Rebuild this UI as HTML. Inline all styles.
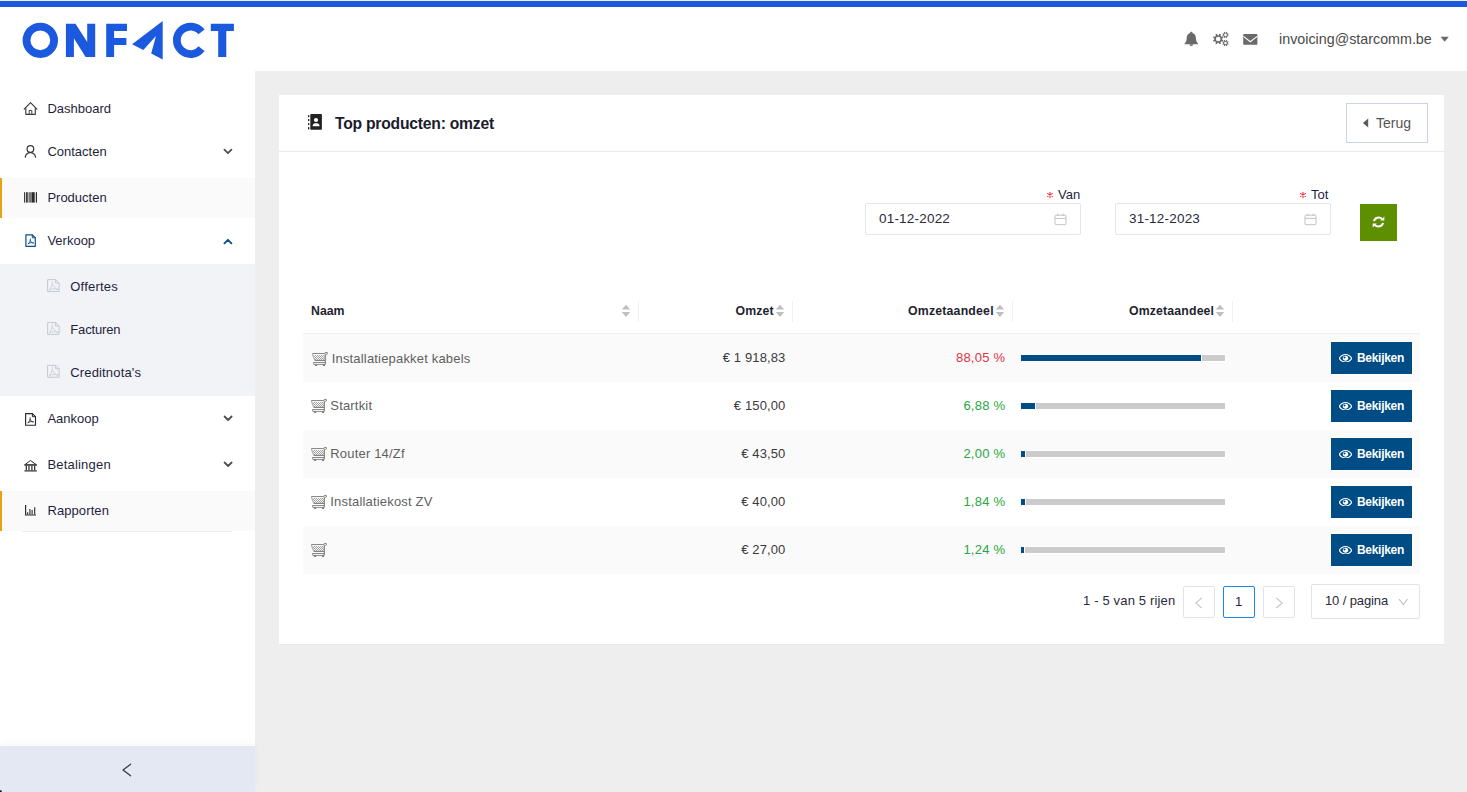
<!DOCTYPE html>
<html lang="nl">
<head>
<meta charset="utf-8">
<title>Top producten: omzet</title>
<style>
*{box-sizing:border-box;margin:0;padding:0}
html,body{width:1467px;height:792px;overflow:hidden}
body{position:relative;background:#eeeeee;font-family:"Liberation Sans",sans-serif;font-size:13px;color:#1f1f3d}
.abs{position:absolute}
.t{position:absolute;white-space:nowrap;line-height:1}
#topline{left:0;top:0;width:1467px;height:1px;background:#f4f0e2}
#topbar{left:0;top:1px;width:1467px;height:6px;background:#1b59de}
#header{left:0;top:7px;width:1467px;height:64px;background:#fff}
#sidebar{left:0;top:71px;width:255px;height:721px;background:#fff}
.nav{position:absolute;left:0;width:255px;height:40px}
.nav.active{background:#fafafa;border-left:2px solid #e8a30c}
.nav .lbl{position:absolute;left:47px;top:0;line-height:40px;font-size:13px;letter-spacing:-0.12px;color:#1f1f3d;white-space:nowrap}
.nav svg{position:absolute}
#submenu{left:0;top:264px;width:255px;height:132px;background:#f2f3f7}
.sub{position:absolute;left:0;width:255px;height:43px}
.sub .lbl{position:absolute;left:70px;top:0;line-height:43px;font-size:13px;color:#2a2a40;white-space:nowrap}
#collapse{left:0;top:746px;width:255px;height:46px;background:#e4e8f2;box-shadow:0 -3px 8px rgba(0,0,0,0.035)}
#card{left:279px;top:95px;width:1165px;height:550px;background:#fff;border-bottom:1px solid #e4e8ef}
#cardhead{left:0;top:0;width:1165px;height:57px;border-bottom:1px solid #e6e9f4}
.nl{font-size:13px;color:#1f1f3d}

#terug{left:1346px;top:103px;width:82px;height:40px;border:1px solid #ccd3e6;background:#fff}
.inp{position:absolute;top:203px;width:216px;height:32px;border:1px solid #e1e6f0;border-radius:2px;background:#fff}
#refresh{left:1360px;top:204px;width:37px;height:37px;background:#5d8f00}
.th{font-size:12.3px;font-weight:700;color:#1f1f30}
.vd{position:absolute;top:301px;width:1px;height:21px;background:#f0f0f0}
.row{position:absolute;left:303px;width:1117px;height:48px}
.row.odd{background:#fafafa}
.nm{font-size:13px;color:#5f5f5f;letter-spacing:0.18px}
.amt{font-size:13px;color:#3a3a3a;text-align:right;letter-spacing:0.12px;margin-right:-0.12px}
.pct{font-size:13px;text-align:right;letter-spacing:0.22px;margin-right:-0.22px}
.red{color:#dc3545}.grn{color:#28a745}
.pb{position:absolute;height:8px;border:1px solid #fff}
.bar{position:absolute;left:1021px;width:204px;height:6px;background:#c8c8c8}
.bar i{position:absolute;left:0;top:0;height:6px;background:#0b4f8a;display:block}
.btn{position:absolute;left:1330px;width:83px;height:34px;border:1px solid #fff;background:#004c84}
.btn span{position:absolute;left:26px;top:10px;line-height:1;font-size:12px;font-weight:700;color:#fff;letter-spacing:-0.3px;white-space:nowrap}
.btn svg{position:absolute;left:8px;top:11.6px}
.pg{position:absolute;top:586px;width:32px;height:32px;border:1px solid #e0e3ee;border-radius:2px;background:#fff}
</style>
</head>
<body>
<div class="abs" id="header"></div>
<div class="abs" id="topline"></div>
<div class="abs" id="topbar"></div>
<svg class="abs" id="hdrsvg" style="left:0;top:0" width="1467" height="71" viewBox="0 0 1467 71">
<g fill="#1b59de">
<circle cx="40.3" cy="40.35" r="13.8" fill="none" stroke="#1b59de" stroke-width="7.8"/>
<path d="M65.9,23.8 L75.5,23.8 L87.2,42.0 L87.2,23.8 L95.2,23.8 L95.2,57.1 L85.6,57.1 L73.9,38.3 L73.9,57.1 L65.9,57.1Z"/>
<path d="M106.2,23.8 H127 V31 H114.1 V37.9 H126.4 V45.1 H114.1 V57.1 H106.2Z"/>
<path d="M162.7,21.1 L132.1,44.3 L143.3,50 L156,35.9 L151.2,53.4 L162.7,59.6Z"/>
<path d="M201.51,31.98 A13.75,13.75 0 1,0 201.51,48.72" fill="none" stroke="#1b59de" stroke-width="7.8"/>
<path d="M210.8,23.8 H233.9 V31 H226.3 V57.1 H218.2 V31 H210.8Z"/>
</g>
<g fill="#6a6a6a">
<path d="M1191.3,31.8 C1192,31.8 1192.5,32.3 1192.5,33 C1194.6,33.6 1195.9,35.5 1195.9,37.8 C1195.9,40.6 1196.6,42.4 1198,43.6 L1198,44.2 L1184.6,44.2 L1184.6,43.6 C1186,42.4 1186.7,40.6 1186.7,37.8 C1186.7,35.5 1188,33.6 1190.1,33 C1190.1,32.3 1190.6,31.8 1191.3,31.8Z M1189.5,44.6 H1193.1 C1193.1,45.5 1192.3,46.1 1191.3,46.1 C1190.3,46.1 1189.5,45.5 1189.5,44.6Z"/>
<path fill-rule="evenodd" d="M1223.37,40.16 L1222.67,41.84 L1221.36,41.29 L1220.49,42.16 L1221.04,43.47 L1219.36,44.17 L1218.81,42.85 L1217.59,42.85 L1217.04,44.17 L1215.36,43.47 L1215.91,42.16 L1215.04,41.29 L1213.73,41.84 L1213.03,40.16 L1214.35,39.61 L1214.35,38.39 L1213.03,37.84 L1213.73,36.16 L1215.04,36.71 L1215.91,35.84 L1215.36,34.53 L1217.04,33.83 L1217.59,35.15 L1218.81,35.15 L1219.36,33.83 L1221.04,34.53 L1220.49,35.84 L1221.36,36.71 L1222.67,36.16 L1223.37,37.84 L1222.05,38.39 L1222.05,39.61Z M1220.50,39.00 A2.3,2.3 0 1,0 1215.90,39.00 A2.3,2.3 0 1,0 1220.50,39.00Z"/>
<path fill-rule="evenodd" d="M1228.62,35.60 L1228.20,36.61 L1227.36,36.25 L1226.85,36.76 L1227.21,37.60 L1226.20,38.02 L1225.86,37.17 L1225.14,37.17 L1224.80,38.02 L1223.79,37.60 L1224.15,36.76 L1223.64,36.25 L1222.80,36.61 L1222.38,35.60 L1223.23,35.26 L1223.23,34.54 L1222.38,34.20 L1222.80,33.19 L1223.64,33.55 L1224.15,33.04 L1223.79,32.20 L1224.80,31.78 L1225.14,32.63 L1225.86,32.63 L1226.20,31.78 L1227.21,32.20 L1226.85,33.04 L1227.36,33.55 L1228.20,33.19 L1228.62,34.20 L1227.77,34.54 L1227.77,35.26Z M1226.80,34.90 A1.3,1.3 0 1,0 1224.20,34.90 A1.3,1.3 0 1,0 1226.80,34.90Z"/>
<path fill-rule="evenodd" d="M1228.62,43.75 L1228.20,44.76 L1227.36,44.40 L1226.85,44.91 L1227.21,45.75 L1226.20,46.17 L1225.86,45.32 L1225.14,45.32 L1224.80,46.17 L1223.79,45.75 L1224.15,44.91 L1223.64,44.40 L1222.80,44.76 L1222.38,43.75 L1223.23,43.41 L1223.23,42.69 L1222.38,42.35 L1222.80,41.34 L1223.64,41.70 L1224.15,41.19 L1223.79,40.35 L1224.80,39.93 L1225.14,40.78 L1225.86,40.78 L1226.20,39.93 L1227.21,40.35 L1226.85,41.19 L1227.36,41.70 L1228.20,41.34 L1228.62,42.35 L1227.77,42.69 L1227.77,43.41Z M1226.80,43.05 A1.3,1.3 0 1,0 1224.20,43.05 A1.3,1.3 0 1,0 1226.80,43.05Z"/>
<rect x="1243.2" y="34" width="14.2" height="10.7" rx="0.8"/>
<path d="M1243.4,36.4 L1250.3,41.7 L1257.2,36.4" fill="none" stroke="#fff" stroke-width="1.1"/>
<path d="M1440.5,36.8 H1448.8 L1444.65,41.8Z"/>
</g>
</svg>
<div class="t" id="email" style="left:1279px;top:32px;font-size:14.3px;color:#4a4a4a">invoicing@starcomm.be</div>
<div class="abs" id="sidebar">
<div class="nav active" style="top:107px"></div>
<div class="nav active" style="top:420px"></div>
<div class="abs" style="left:22px;top:460px;width:210px;height:1px;background:#ececf1"></div>
<div class="abs" id="submenu" style="top:193px"></div>
<div class="abs" id="collapse" style="top:675px"></div>
</div>
<svg class="abs" id="sidesvg" style="left:0;top:71px" width="255" height="721" viewBox="0 71 255 721" fill="none" stroke-linecap="round" stroke-linejoin="round">
<g stroke="#3a3a3a" stroke-width="1.15">
<path d="M24.2,109.1 L30.5,102.7 L36.9,109.1"/>
<path d="M25.8,108.6 V114.3 H35.3 V108.6"/>
<path d="M29.2,114.3 V110.4 H31.8 V114.3" stroke-width="1"/>
<circle cx="30.4" cy="149" r="3.3" stroke-width="1.25"/>
<path d="M25.3,157.2 A5.1,4.5 0 0,1 35.5,157.2" stroke-width="1.25"/>
</g>
<g fill="#2a2a2a" stroke="none">
<rect x="24.1" y="192.2" width="1.1" height="10.4"/>
<rect x="26.1" y="192.2" width="1.6" height="10.4"/>
<rect x="28.4" y="192.2" width="2.9" height="10.4" fill="#7a7a7a"/>
<rect x="31.5" y="192.2" width="3.2" height="10.4"/>
<rect x="35.8" y="192.2" width="1.2" height="10.4"/>
</g>
<g stroke="#0b4f8a" stroke-width="1.2">
<path d="M25.9,234.8 H32.3 L35.3,237.8 V246.3 H25.9Z"/>
<path d="M32.3,234.8 V237.8 H35.3" stroke-width="1"/>
<path d="M28.2,243.9 C29.8,242.6 30.6,240.8 30.4,238.9 M30.4,240.6 C31,242.2 32,242.9 33.4,242.9 M28.4,243.6 C30,242.6 31.8,242.3 33.4,242.9" stroke-width="0.9"/>
<path d="M224.4,243.3 L227.9,239.8 L231.4,243.3" stroke-width="1.8"/>
</g>
<g stroke="#c4c9d6" stroke-width="1">
<path d="M48,279.6 H55.6 L59.1,283.1 V291.5 H48Z M55.6,279.6 V283.1 H59.1"/>
<path d="M52.3,281.4 C52.7,284.6 51.2,287.8 49.2,290.4 M52.7,284.6 C54,287.3 56,289.0 58,289.6 M49.8,289.8 C52.2,288.5 55.4,288.3 58,289.6" stroke-width="0.8"/>
<path d="M48,322.5 H55.6 L59.1,326 V334.4 H48Z M55.6,322.5 V326 H59.1"/>
<path d="M52.3,324.3 C52.7,327.5 51.2,330.7 49.2,333.3 M52.7,327.5 C54,330.2 56,331.9 58,332.5 M49.8,332.7 C52.2,331.4 55.4,331.2 58,332.5" stroke-width="0.8"/>
<path d="M48,365.3 H55.6 L59.1,368.8 V377.2 H48Z M55.6,365.3 V368.8 H59.1"/>
<path d="M52.3,367.1 C52.7,370.3 51.2,373.5 49.2,376.1 M52.7,370.3 C54,373.0 56,374.7 58,375.3 M49.8,375.5 C52.2,374.2 55.4,374.0 58,375.3" stroke-width="0.8"/>
</g>
<g stroke="#2a2a2a" stroke-width="1.15">
<path d="M25.6,413.6 H32.4 L35.5,416.7 V425.2 H25.6Z"/>
<path d="M32.4,413.6 V416.7 H35.5" stroke-width="1"/>
<path d="M28,422.8 C29.6,421.5 30.4,419.7 30.2,417.8 M30.2,419.5 C30.8,421.1 31.8,421.8 33.2,421.8 M28.2,422.5 C29.8,421.5 31.6,421.2 33.2,421.8" stroke-width="0.9"/>
<path d="M25,464.6 L30.5,460.5 L36.2,464.6Z" stroke-width="1" />
<path d="M24.4,465 H36.8" stroke-width="1" stroke-linecap="butt"/>
<path d="M26.3,465.4 V470.2 M29,465.4 V470.2 M31.9,465.4 V470.2 M34.7,465.4 V470.2" stroke-width="1.2" stroke-linecap="butt"/>
<path d="M24.4,470.9 H36.8" stroke-width="1.2" stroke-linecap="butt"/>
<path d="M25.6,505 V515 H36" stroke-width="1.2" stroke-linecap="butt"/>
<path d="M27.7,514.4 V512.3 M29.9,514.4 V509 M32.1,514.4 V510 M34.7,514.4 V507.3" stroke-width="1.1" stroke-linecap="butt"/>
</g>
<g stroke="#505050" stroke-width="1.8">
<path d="M224.4,149.6 L227.9,153.1 L231.4,149.6"/>
<path d="M224.6,416.5 L228.1,420 L231.6,416.5"/>
<path d="M224.6,462.5 L228.1,466 L231.6,462.5"/>
</g>
<path d="M130.6,764.2 L123,770 L130.6,775.8" stroke="#3a3a4a" stroke-width="1.3"/>
</svg>
<div class="t nl" id="n0" style="left:47.4px;top:102px">Dashboard</div>
<div class="t nl" id="n1" style="left:47.4px;top:145px">Contacten</div>
<div class="t nl" id="n2" style="left:47.4px;top:191px">Producten</div>
<div class="t nl" id="n3" style="left:47.4px;top:234px">Verkoop</div>
<div class="t nl" id="n4" style="left:70.3px;top:280px;letter-spacing:0.2px">Offertes</div>
<div class="t nl" id="n5" style="left:70.3px;top:323px;letter-spacing:-0.15px">Facturen</div>
<div class="t nl" id="n6" style="left:70.3px;top:366px;letter-spacing:0.15px">Creditnota's</div>
<div class="t nl" id="n7" style="left:47.4px;top:412px">Aankoop</div>
<div class="t nl" id="n8" style="left:47.4px;top:458px;letter-spacing:0.2px">Betalingen</div>
<div class="t nl" id="n9" style="left:47.4px;top:504px;letter-spacing:0.1px">Rapporten</div>
<div class="abs" id="card"><div class="abs" id="cardhead"></div></div>
<svg class="abs" style="left:306px;top:112px" width="18" height="20" viewBox="306 112 18 20">
<rect x="310.3" y="114" width="11.6" height="15.8" rx="0.8" fill="#222"/>
<g fill="#222"><rect x="308" y="115.2" width="1.3" height="2"/><rect x="308" y="119.1" width="1.3" height="2"/><rect x="308" y="123.1" width="1.3" height="2"/><rect x="308" y="127.1" width="1.3" height="2.3"/></g>
<circle cx="316" cy="120" r="2.1" fill="#fff"/>
<path d="M312.6,126.2 C312.6,124.4 313.8,123.3 315.2,123.3 H316.9 C318.3,123.3 319.7,124.4 319.7,126.2Z" fill="#fff"/>
</svg>
<div class="t" id="title" style="left:335px;top:116px;font-size:15.7px;letter-spacing:-0.23px;font-weight:700;color:#1c1c2c">Top producten: omzet</div>
<div class="abs" id="terug"></div>
<svg class="abs" style="left:1362px;top:118px" width="7" height="10" viewBox="0 0 7 10"><path d="M6.2,0.5 V9.5 L0.9,5Z" fill="#5a5a5a"/></svg>
<div class="t" id="terugt" style="left:1376px;top:116px;font-size:14px;color:#555">Terug</div>

<svg class="abs" style="left:1045.5px;top:191px" width="8" height="8" viewBox="-4 -4 8 8" stroke="#f5222d" stroke-width="1.05" stroke-linecap="round"><path d="M0,-2.7 V2.7 M-2.35,-1.4 L2.35,1.4 M-2.35,1.4 L2.35,-1.4"/></svg>
<div class="t" id="vanl" style="left:1058px;top:188px;font-size:13px;color:#1f1f3d">Van</div>
<svg class="abs" style="left:1299.3px;top:191px" width="8" height="8" viewBox="-4 -4 8 8" stroke="#f5222d" stroke-width="1.05" stroke-linecap="round"><path d="M0,-2.7 V2.7 M-2.35,-1.4 L2.35,1.4 M-2.35,1.4 L2.35,-1.4"/></svg>
<div class="t" id="totl" style="left:1311px;top:188px;font-size:13px;color:#1f1f3d">Tot</div>
<div class="inp" style="left:865px"></div>
<div class="inp" style="left:1115px"></div>
<div class="t" id="d1" style="left:879px;top:212px;font-size:13.5px;letter-spacing:0.2px;color:#2a2a3a">01-12-2022</div>
<div class="t" id="d2" style="left:1129px;top:212px;font-size:13.5px;letter-spacing:0.2px;color:#2a2a3a">31-12-2023</div>
<svg class="abs" style="left:1054px;top:213px" width="13" height="13" viewBox="0 0 13 13" fill="none" stroke="#c3c3c3" stroke-width="1"><rect x="1" y="2.2" width="11" height="9.5" rx="0.8"/><path d="M1,5.4 H12 M3.8,0.6 V3 M9.2,0.6 V3"/></svg>
<svg class="abs" style="left:1304px;top:213px" width="13" height="13" viewBox="0 0 13 13" fill="none" stroke="#c3c3c3" stroke-width="1"><rect x="1" y="2.2" width="11" height="9.5" rx="0.8"/><path d="M1,5.4 H12 M3.8,0.6 V3 M9.2,0.6 V3"/></svg>
<div class="abs" id="refresh"></div>
<svg class="abs" style="left:1372px;top:216px" width="13" height="12" viewBox="0 0 13 12" fill="none" stroke="#fff" stroke-width="2"><path d="M2,5.2 A4.6,4.3 0 0,1 10.2,3.2"/><path d="M11,6.8 A4.6,4.3 0 0,1 2.8,8.8"/><path d="M12.3,0.6 V4.6 H8.3Z" fill="#fff" stroke="none"/><path d="M0.7,11.4 V7.4 H4.7Z" fill="#fff" stroke="none"/></svg>

<div class="abs" style="left:303px;top:333px;width:1117px;height:1px;background:#f0f0f0"></div>
<div class="t th" id="h1" style="left:311px;top:305px">Naam</div>
<div class="t th" id="h2" style="left:735.5px;top:305px;letter-spacing:0.12px">Omzet</div>
<div class="t th" id="h3" style="left:908px;top:305px;letter-spacing:0.2px">Omzetaandeel</div>
<div class="t th" id="h4" style="left:1129px;top:305px;letter-spacing:0.15px">Omzetaandeel</div>
<div class="vd" style="left:638px"></div><div class="vd" style="left:792px"></div><div class="vd" style="left:1012px"></div><div class="vd" style="left:1232px"></div>
<svg class="abs" style="left:620.5px;top:304px" width="10" height="14" viewBox="0 0 10 14" fill="#bfbfbf"><path d="M5,0.7 L9.2,5.6 H0.8Z M0.8,8 H9.2 L5,12.9Z"/></svg>
<svg class="abs" style="left:775px;top:304px" width="10" height="14" viewBox="0 0 10 14" fill="#bfbfbf"><path d="M5,0.7 L9.2,5.6 H0.8Z M0.8,8 H9.2 L5,12.9Z"/></svg>
<svg class="abs" style="left:994.5px;top:304px" width="10" height="14" viewBox="0 0 10 14" fill="#bfbfbf"><path d="M5,0.7 L9.2,5.6 H0.8Z M0.8,8 H9.2 L5,12.9Z"/></svg>
<svg class="abs" style="left:1215px;top:304px" width="10" height="14" viewBox="0 0 10 14" fill="#bfbfbf"><path d="M5,0.7 L9.2,5.6 H0.8Z M0.8,8 H9.2 L5,12.9Z"/></svg>
<div class="row odd" style="top:334px"></div>
<svg class="abs cart" style="left:312px;top:352px" width="16" height="14" viewBox="0 0 16 14"><path d="M0.9,2 H12.8 L13,8.4 H2.9Z" fill="#f6f6f6"/><path d="M1.3,3 H12.8 L13,8.4 H2.9Z" fill="url(#mesh)"/>
<path d="M0.5,1.5 H12.6" stroke="#8a8a8a" stroke-width="1" fill="none"/>
<path d="M0.5,1.2 V2.8 L2.8,8.4" stroke="#9a9a9a" stroke-width="0.9" fill="none"/>
<path d="M2.8,8.4 H13" stroke="#777" stroke-width="1" fill="none"/>
<path d="M13.3,1.6 V12.6" stroke="#787878" stroke-width="1.1" fill="none"/>
<path d="M12.6,1.6 L13.2,0.5 H15.3 L16,1.3 L14.3,2.6" stroke="#7d7d7d" stroke-width="0.9" fill="#ddd"/>
<path d="M1.4,10.5 H13.3 M1.8,12.4 H13.3 M1.4,10.5 L1.8,12.4" stroke="#7c7c7c" stroke-width="0.9" fill="none"/>
<rect x="3.1" y="12.8" width="2.1" height="1.1" fill="#666"/><rect x="10.9" y="12.8" width="2.1" height="1.1" fill="#666"/></svg>
<div class="t nm" id="nm0" style="left:331.7px;top:352px">Installatiepakket kabels</div>
<div class="t amt" id="amt0" style="right:681.7px;top:351px">€ 1 918,83</div>
<div class="t pct red" id="pct0" style="right:462.0px;top:351px">88,05 %</div>
<div class="pb" style="left:1020px;top:354px;width:182px;background:#004c84"></div><div class="pb" style="left:1201px;top:354px;width:25px;background:#cbcbcb"></div>
<div class="btn" style="top:341px"><svg width="13" height="8.6" preserveAspectRatio="none" viewBox="0 0 14 10"><path d="M0.3,5 C2,2 4.3,0.6 7,0.6 C9.7,0.6 12,2 13.7,5 C12,8 9.7,9.4 7,9.4 C4.3,9.4 2,8 0.3,5Z" fill="none" stroke="#fff" stroke-width="1.2"/><circle cx="7" cy="5" r="2.9" fill="#fff"/><circle cx="6" cy="4" r="1.1" fill="#004c84"/></svg><span>Bekijken</span></div>
<div class="row" style="top:382px"></div>
<svg class="abs cart" style="left:311px;top:399px" width="16" height="14" viewBox="0 0 16 14"><path d="M0.9,2 H12.8 L13,8.4 H2.9Z" fill="#f6f6f6"/><path d="M1.3,3 H12.8 L13,8.4 H2.9Z" fill="url(#mesh)"/>
<path d="M0.5,1.5 H12.6" stroke="#8a8a8a" stroke-width="1" fill="none"/>
<path d="M0.5,1.2 V2.8 L2.8,8.4" stroke="#9a9a9a" stroke-width="0.9" fill="none"/>
<path d="M2.8,8.4 H13" stroke="#777" stroke-width="1" fill="none"/>
<path d="M13.3,1.6 V12.6" stroke="#787878" stroke-width="1.1" fill="none"/>
<path d="M12.6,1.6 L13.2,0.5 H15.3 L16,1.3 L14.3,2.6" stroke="#7d7d7d" stroke-width="0.9" fill="#ddd"/>
<path d="M1.4,10.5 H13.3 M1.8,12.4 H13.3 M1.4,10.5 L1.8,12.4" stroke="#7c7c7c" stroke-width="0.9" fill="none"/>
<rect x="3.1" y="12.8" width="2.1" height="1.1" fill="#666"/><rect x="10.9" y="12.8" width="2.1" height="1.1" fill="#666"/></svg>
<div class="t nm" id="nm1" style="left:330.3px;top:399px">Startkit</div>
<div class="t amt" id="amt1" style="right:681.7px;top:399px">€ 150,00</div>
<div class="t pct grn" id="pct1" style="right:462.0px;top:399px">6,88 %</div>
<div class="pb" style="left:1020px;top:402px;width:16px;background:#004c84"></div><div class="pb" style="left:1035px;top:402px;width:191px;background:#cbcbcb"></div>
<div class="btn" style="top:389px"><svg width="13" height="8.6" preserveAspectRatio="none" viewBox="0 0 14 10"><path d="M0.3,5 C2,2 4.3,0.6 7,0.6 C9.7,0.6 12,2 13.7,5 C12,8 9.7,9.4 7,9.4 C4.3,9.4 2,8 0.3,5Z" fill="none" stroke="#fff" stroke-width="1.2"/><circle cx="7" cy="5" r="2.9" fill="#fff"/><circle cx="6" cy="4" r="1.1" fill="#004c84"/></svg><span>Bekijken</span></div>
<div class="row odd" style="top:430px"></div>
<svg class="abs cart" style="left:311px;top:447px" width="16" height="14" viewBox="0 0 16 14"><path d="M0.9,2 H12.8 L13,8.4 H2.9Z" fill="#f6f6f6"/><path d="M1.3,3 H12.8 L13,8.4 H2.9Z" fill="url(#mesh)"/>
<path d="M0.5,1.5 H12.6" stroke="#8a8a8a" stroke-width="1" fill="none"/>
<path d="M0.5,1.2 V2.8 L2.8,8.4" stroke="#9a9a9a" stroke-width="0.9" fill="none"/>
<path d="M2.8,8.4 H13" stroke="#777" stroke-width="1" fill="none"/>
<path d="M13.3,1.6 V12.6" stroke="#787878" stroke-width="1.1" fill="none"/>
<path d="M12.6,1.6 L13.2,0.5 H15.3 L16,1.3 L14.3,2.6" stroke="#7d7d7d" stroke-width="0.9" fill="#ddd"/>
<path d="M1.4,10.5 H13.3 M1.8,12.4 H13.3 M1.4,10.5 L1.8,12.4" stroke="#7c7c7c" stroke-width="0.9" fill="none"/>
<rect x="3.1" y="12.8" width="2.1" height="1.1" fill="#666"/><rect x="10.9" y="12.8" width="2.1" height="1.1" fill="#666"/></svg>
<div class="t nm" id="nm2" style="left:330.3px;top:447px">Router 14/Zf</div>
<div class="t amt" id="amt2" style="right:681.7px;top:447px">€ 43,50</div>
<div class="t pct grn" id="pct2" style="right:462.0px;top:447px">2,00 %</div>
<div class="pb" style="left:1020px;top:450px;width:6px;background:#004c84"></div><div class="pb" style="left:1025px;top:450px;width:201px;background:#cbcbcb"></div>
<div class="btn" style="top:437px"><svg width="13" height="8.6" preserveAspectRatio="none" viewBox="0 0 14 10"><path d="M0.3,5 C2,2 4.3,0.6 7,0.6 C9.7,0.6 12,2 13.7,5 C12,8 9.7,9.4 7,9.4 C4.3,9.4 2,8 0.3,5Z" fill="none" stroke="#fff" stroke-width="1.2"/><circle cx="7" cy="5" r="2.9" fill="#fff"/><circle cx="6" cy="4" r="1.1" fill="#004c84"/></svg><span>Bekijken</span></div>
<div class="row" style="top:478px"></div>
<svg class="abs cart" style="left:311px;top:495px" width="16" height="14" viewBox="0 0 16 14"><path d="M0.9,2 H12.8 L13,8.4 H2.9Z" fill="#f6f6f6"/><path d="M1.3,3 H12.8 L13,8.4 H2.9Z" fill="url(#mesh)"/>
<path d="M0.5,1.5 H12.6" stroke="#8a8a8a" stroke-width="1" fill="none"/>
<path d="M0.5,1.2 V2.8 L2.8,8.4" stroke="#9a9a9a" stroke-width="0.9" fill="none"/>
<path d="M2.8,8.4 H13" stroke="#777" stroke-width="1" fill="none"/>
<path d="M13.3,1.6 V12.6" stroke="#787878" stroke-width="1.1" fill="none"/>
<path d="M12.6,1.6 L13.2,0.5 H15.3 L16,1.3 L14.3,2.6" stroke="#7d7d7d" stroke-width="0.9" fill="#ddd"/>
<path d="M1.4,10.5 H13.3 M1.8,12.4 H13.3 M1.4,10.5 L1.8,12.4" stroke="#7c7c7c" stroke-width="0.9" fill="none"/>
<rect x="3.1" y="12.8" width="2.1" height="1.1" fill="#666"/><rect x="10.9" y="12.8" width="2.1" height="1.1" fill="#666"/></svg>
<div class="t nm" id="nm3" style="left:330.3px;top:495px">Installatiekost ZV</div>
<div class="t amt" id="amt3" style="right:681.7px;top:495px">€ 40,00</div>
<div class="t pct grn" id="pct3" style="right:462.0px;top:495px">1,84 %</div>
<div class="pb" style="left:1020px;top:498px;width:6px;background:#004c84"></div><div class="pb" style="left:1025px;top:498px;width:201px;background:#cbcbcb"></div>
<div class="btn" style="top:485px"><svg width="13" height="8.6" preserveAspectRatio="none" viewBox="0 0 14 10"><path d="M0.3,5 C2,2 4.3,0.6 7,0.6 C9.7,0.6 12,2 13.7,5 C12,8 9.7,9.4 7,9.4 C4.3,9.4 2,8 0.3,5Z" fill="none" stroke="#fff" stroke-width="1.2"/><circle cx="7" cy="5" r="2.9" fill="#fff"/><circle cx="6" cy="4" r="1.1" fill="#004c84"/></svg><span>Bekijken</span></div>
<div class="row odd" style="top:526px"></div>
<svg class="abs cart" style="left:311px;top:543px" width="16" height="14" viewBox="0 0 16 14"><path d="M0.9,2 H12.8 L13,8.4 H2.9Z" fill="#f6f6f6"/><path d="M1.3,3 H12.8 L13,8.4 H2.9Z" fill="url(#mesh)"/>
<path d="M0.5,1.5 H12.6" stroke="#8a8a8a" stroke-width="1" fill="none"/>
<path d="M0.5,1.2 V2.8 L2.8,8.4" stroke="#9a9a9a" stroke-width="0.9" fill="none"/>
<path d="M2.8,8.4 H13" stroke="#777" stroke-width="1" fill="none"/>
<path d="M13.3,1.6 V12.6" stroke="#787878" stroke-width="1.1" fill="none"/>
<path d="M12.6,1.6 L13.2,0.5 H15.3 L16,1.3 L14.3,2.6" stroke="#7d7d7d" stroke-width="0.9" fill="#ddd"/>
<path d="M1.4,10.5 H13.3 M1.8,12.4 H13.3 M1.4,10.5 L1.8,12.4" stroke="#7c7c7c" stroke-width="0.9" fill="none"/>
<rect x="3.1" y="12.8" width="2.1" height="1.1" fill="#666"/><rect x="10.9" y="12.8" width="2.1" height="1.1" fill="#666"/></svg>
<div class="t amt" id="amt4" style="right:681.7px;top:543px">€ 27,00</div>
<div class="t pct grn" id="pct4" style="right:462.0px;top:543px">1,24 %</div>
<div class="pb" style="left:1020px;top:546px;width:5px;background:#004c84"></div><div class="pb" style="left:1024px;top:546px;width:202px;background:#cbcbcb"></div>
<div class="btn" style="top:533px"><svg width="13" height="8.6" preserveAspectRatio="none" viewBox="0 0 14 10"><path d="M0.3,5 C2,2 4.3,0.6 7,0.6 C9.7,0.6 12,2 13.7,5 C12,8 9.7,9.4 7,9.4 C4.3,9.4 2,8 0.3,5Z" fill="none" stroke="#fff" stroke-width="1.2"/><circle cx="7" cy="5" r="2.9" fill="#fff"/><circle cx="6" cy="4" r="1.1" fill="#004c84"/></svg><span>Bekijken</span></div>
<div class="t" id="pginfo" style="left:1083px;top:594px;font-size:13px;letter-spacing:0.16px;color:#2a2a3a">1 - 5 van 5 rijen</div>
<div class="pg" style="left:1183px"></div>
<div class="pg" style="left:1223px;border-color:#1a86e8"></div>
<div class="pg" style="left:1263px"></div>
<div class="t" id="pg1" style="left:1235px;top:595px;font-size:13px;color:#1f1f3d">1</div>
<svg class="abs" style="left:1194px;top:597px" width="10" height="12" viewBox="0 0 10 12" fill="none" stroke="#c8c8c8" stroke-width="1.1"><path d="M7.6,1 L1.8,6 L7.6,11"/></svg>
<svg class="abs" style="left:1274px;top:597px" width="10" height="12" viewBox="0 0 10 12" fill="none" stroke="#c8c8c8" stroke-width="1.1"><path d="M2.4,1 L8.2,6 L2.4,11"/></svg>
<div class="abs" id="psel" style="left:1311px;top:584px;width:109px;height:35px;border:1px solid #e0e3ee;border-radius:2px;background:#fff"></div>
<div class="t" id="pselt" style="left:1325px;top:594px;font-size:13px;letter-spacing:-0.12px;color:#2a2a3a">10 / pagina</div>
<svg class="abs" style="left:1398px;top:598px" width="11" height="8" viewBox="0 0 11 8" fill="none" stroke="#c3c3c3" stroke-width="1.1"><path d="M1,1.2 L5.3,6.6 L9.6,1.2"/></svg>
<svg width="0" height="0" style="position:absolute"><defs>
<pattern id="mesh" width="2" height="2" patternUnits="userSpaceOnUse"><rect width="2" height="2" fill="#f4f4f4"/><rect x="0" y="0" width="1" height="1" fill="#a6a6a6"/><rect x="1" y="1" width="1" height="1" fill="#a6a6a6"/></pattern>
</defs></svg>
<div class="abs" style="left:0;top:790px;width:2px;height:2px;background:#1c2436;border-top-right-radius:2px"></div>
</body>
</html>
